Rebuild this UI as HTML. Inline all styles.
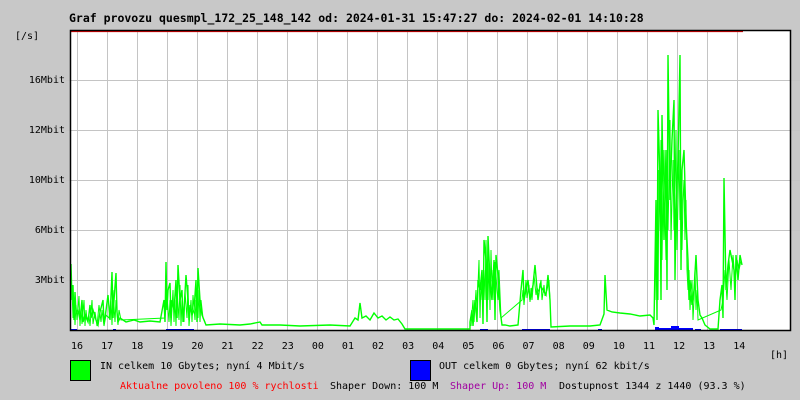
<!DOCTYPE html>
<html><head><meta charset="utf-8"><style>
body{margin:0;width:800px;height:400px;background:#c8c8c8;overflow:hidden;position:relative;font-family:"DejaVu Sans Mono","Liberation Mono",monospace;font-size:10px;color:#000}
.t{position:absolute;white-space:pre;line-height:12px}
</style></head><body>
<svg width="800" height="400" style="position:absolute;left:0;top:0">
<rect x="70" y="30" width="720" height="300" fill="#fff"/>
<g stroke="#c4c4c4" stroke-width="1">
<path d="M77.5 31V330M107.5 31V330M137.5 31V330M167.5 31V330M197.5 31V330M227.5 31V330M257.5 31V330M287.5 31V330M317.5 31V330M347.5 31V330M377.5 31V330M407.5 31V330M437.5 31V330M467.5 31V330M497.5 31V330M527.5 31V330M557.5 31V330M587.5 31V330M617.5 31V330M647.5 31V330M677.5 31V330M707.5 31V330M737.5 31V330"/>
<path d="M66 80.5H800M66 130.5H800M66 180.5H800M66 230.5H800M66 280.5H800"/>
</g>
<g fill="none" stroke="#00ff00" stroke-width="1.4">
<polyline points="71,264 72,300 73,285 74,320 75,292 76,312 78,310 80,320 82,300 83,322 85,315 88,322 90,305 91,318 93,310 96,320 98,325 100,312 103,300 104,322 105,318 108,295 110,320 112,272 113,318 114,300 116,273 117,312 118,322 120,318 123,320 126,322 130,321 134,320 140,322 150,321 160,322 164,300 165,322 166,262 167,310 168,290 170,283 171,318 172,300 174,310 176,280 177,318 178,265 180,300 182,290 183,322 184,310 186,275 188,300 189,320 190,305 192,315 194,310 196,280 197,322 198,268 200,300 202,315 204,320 206,325 220,324 240,325 250,324 260,322 262,325 280,325 300,326 330,325 350,326 355,318 358,320 360,303 362,318 366,316 370,320 374,313 378,318 382,316 386,320 390,317 394,320 398,319 402,324 405,329 470,329 470,322 472,310 473,326 475,300 477,322 478,280 480,290 482,270 483,324 484,240 486,260 487,322 488,236 490,280 492,300 494,260 495,320 496,255 498,275 500,310 502,325 505,325 510,326 518,325 521,290 523,270 524,300 525,295 528,280 530,300 533,285 535,265 538,300 540,285 543,290 546,295 548,275 550,300 551,327 570,326 590,326 600,325 604,314 605,275 607,310 612,312 620,313 630,314 640,316 650,315 653,318 654,325 656,200 657,320 658,110 660,180 661,300 662,115 664,240 666,150 667,290 668,55 670,200 672,140 674,100 675,280 676,210 678,160 680,55 681,270 682,170 684,150 686,220 688,260 689,300 690,280 692,305 694,290 696,255 698,300 700,315 702,318 705,325 710,329 718,329 720,300 722,285 723,318 724,178 726,290 728,265 730,250 732,260 734,270 735,300 736,255 738,280 740,255 742,265"/>
<polyline stroke-width="1" points="72,290 73,318 74,300 75,325 76,305 77,320 79,296 80,326 81,308 82,324 84,300 85,326 86,310 87,320 89,315 90,326 92,300 93,324 95,312 97,326 99,305 101,322 102,310 104,326 106,315 109,318 111,300 112,325 113,290 115,322 116,300 118,325 119,310 121,320 165,318 167,295 169,322 170,300 171,326 173,290 174,322 175,300 176,326 177,290 179,320 180,285 181,326 182,300 184,322 185,292 187,318 188,285 189,326 191,300 192,322 193,295 195,320 196,300 198,318 199,290 200,322 201,300 203,318 205,322"/>
<polyline stroke-width="1" points="471,326 473,300 474,322 476,290 477,310 479,260 480,318 481,280 482,300 484,270 485,300 486,240 487,290 488,300 489,260 490,310 491,250 492,290 493,270 494,300 495,262 497,290 498,300 499,270 501,318 522,300 523,290 524,305 526,280 527,298 529,285 530,302 531,288 532,300 534,275 536,295 537,288 539,292 541,280 542,300 544,285 545,296 547,290 549,280 550,300"/>
<polyline stroke-width="1" points="655,300 656,250 657,210 658,300 659,170 660,230 661,140 662,260 663,190 664,150 665,210 666,260 667,170 668,230 669,180 670,120 671,240 672,200 673,160 674,230 675,190 676,130 677,250 678,200 679,150 680,220 681,190 682,250 683,200 684,180 685,240 686,200 687,270 688,290 689,270 690,310 691,290 692,280 693,320 694,300 695,270 696,310 697,290 698,320 721,310 723,300 725,270 727,300 729,260 731,290 733,255 735,280 737,260 739,270 741,260"/>
</g>
<path fill="#0000ff" d="M71 329h6v1h-6zM113 329h3v1h-3zM166 329h28v1h-28zM480 329h8v1h-8zM522 329h28v1h-28zM598 329h4v1h-4zM655 327h4v3h-4zM659 328h12v2h-12zM671 326h8v4h-8zM679 328h14v2h-14zM695 329h6v1h-6zM720 329h22v1h-22z"/>
<path d="M70 31.5H743" stroke="#e00000" stroke-width="1.2"/>
<rect x="70.5" y="30.5" width="720" height="300" fill="none" stroke="#000" stroke-width="1.5"/>
<rect x="70.5" y="360.5" width="20" height="20" fill="#00ff00" stroke="#000"/>
<rect x="410.5" y="360.5" width="20" height="20" fill="#0000ff" stroke="#000"/>
</svg>
<div class="t" style="left:69px;top:12px;font-weight:bold;font-size:11.5px">Graf provozu quesmpl_172_25_148_142 od: 2024-01-31 15:47:27 do: 2024-02-01 14:10:28</div>
<div class="t" style="left:15px;top:31px">[/s]</div>
<div class="t" style="right:735px;top:75px">16Mbit</div>
<div class="t" style="right:735px;top:125px">12Mbit</div>
<div class="t" style="right:735px;top:175px">10Mbit</div>
<div class="t" style="right:735px;top:225px">6Mbit</div>
<div class="t" style="right:735px;top:275px">3Mbit</div>
<div class="t" style="left:71px;top:341px">16   17   18   19   20   21   22   23   00   01   02   03   04   05   06   07   08   09   10   11   12   13   14</div>
<div class="t" style="left:770px;top:350px">[h]</div>
<div class="t" style="left:100px;top:361px">IN celkem 10 Gbytes; nyní 4 Mbit/s</div>
<div class="t" style="left:439px;top:361px">OUT celkem 0 Gbytes; nyní 62 kbit/s</div>
<div class="t" style="left:120px;top:381px;color:#ff0000">Aktualne povoleno 100 % rychlosti</div>
<div class="t" style="left:330px;top:381px">Shaper Down: 100 M</div>
<div class="t" style="left:450px;top:381px;color:#a000a0">Shaper Up: 100 M</div>
<div class="t" style="left:559px;top:381px">Dostupnost 1344 z 1440 (93.3 %)</div>
</body></html>
